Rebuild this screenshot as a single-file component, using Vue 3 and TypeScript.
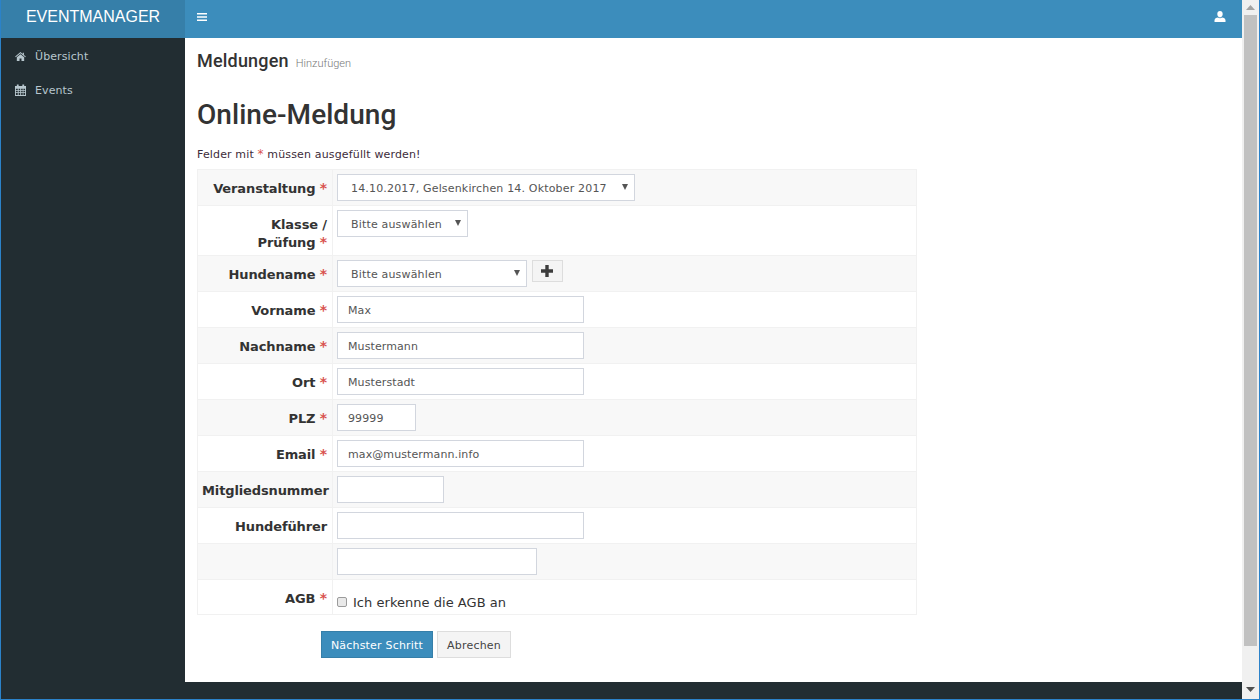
<script setup lang="ts">
interface Row { label: string; req: boolean; width?: number; value?: string }
const textRows: Row[] = [
  { label: 'Vorname', req: true, width: 247, value: 'Max' },
  { label: 'Nachname', req: true, width: 247, value: 'Mustermann' },
  { label: 'Ort', req: true, width: 247, value: 'Musterstadt' },
  { label: 'PLZ', req: true, width: 79, value: '99999' },
  { label: 'Email', req: true, width: 247, value: 'max@mustermann.info' },
  { label: 'Mitgliedsnummer', req: false, width: 107, value: '' },
  { label: 'Hundeführer', req: false, width: 247, value: '' },
  { label: '', req: false, width: 200, value: '' },
]
</script>

<template>
  <div class="window">
    <div class="page">
      <header class="topbar">
        <div class="brand">EVENTMANAGER</div>
        <div class="nav">
          <svg class="burger" width="10" height="8" viewBox="0 0 10 8"><path d="M0 0h10v1.600H0zM0 3.200h10v1.600H0zM0 6.400h10V8H0z" fill="#fff"/></svg>
          <svg class="user" width="12" height="12" viewBox="0 0 12 12"><path d="M6 0c1.700 0 2.700 1.300 2.700 3.100C8.700 4.700 7.800 6.500 6 6.500S3.300 4.700 3.300 3.100C3.300 1.300 4.300 0 6 0zM4 6.400c.5.500 1.200.800 2 .800s1.500-.3 2-.8c1.800.3 3.500 1 3.500 2.800V11H.5V9.200C.5 7.400 2.200 6.700 4 6.400z" fill="#fff"/></svg>
        </div>
      </header>
      <div class="body">
        <aside class="sidebar">
          <a class="item">
            <svg width="11" height="9" viewBox="0 0 13 11"><path d="M6.500 0 0 5.500l.7.800L6.500 1.500l5.800 4.800.7-.8-2.300-1.900V1h-1.500v1.300zM2 6.500V11h3.300V7.800h2.400V11H11V6.500L6.500 2.800z" fill="#b8c7ce"/></svg>
            <span>Übersicht</span>
          </a>
          <a class="item">
            <svg width="11" height="12" viewBox="0 0 12 13"><path fill-rule="evenodd" d="M0 2h2V.5h2V2h4V.5h2V2h2v11H0zM1 5v1.500h2V5zm3 0v1.500h1.700V5zm2.700 0v1.500h1.700V5zm2.500 0v1.500H11V5zM1 7.400V9h2V7.400zm3 0V9h1.700V7.400zm2.700 0V9h1.700V7.400zm2.500 0V9H11V7.400zM1 9.900V12h2V9.900zm3 0V12h1.700V9.900zm2.700 0V12h1.700V9.900zm2.500 0V12H11V9.900z" fill="#b8c7ce"/></svg>
            <span>Events</span>
          </a>
        </aside>
        <main class="content">
          <div class="content-inner">
            <div class="crumb"><h1>Meldungen</h1><small>Hinzufügen</small></div>
            <h2>Online-Meldung</h2>
            <p class="hint">Felder mit <span class="star">*</span> müssen ausgefüllt werden!</p>
            <table class="form">
              <tbody>
                <tr>
                  <th>Veranstaltung <span class="star">*</span></th>
                  <td><span class="select w298">14.10.2017, Gelsenkirchen 14. Oktober 2017<i class="caret"></i></span></td>
                </tr>
                <tr>
                  <th>Klasse /<br />Prüfung <span class="star">*</span></th>
                  <td class="tall"><span class="select w131">Bitte auswählen<i class="caret"></i></span></td>
                </tr>
                <tr>
                  <th>Hundename <span class="star">*</span></th>
                  <td>
                    <div class="with-add">
                      <span class="select w190">Bitte auswählen<i class="caret"></i></span>
                      <button class="add" type="button">
                        <svg width="12" height="12" viewBox="0 0 12 12"><path d="M4.300 0h3.400v4.300H12v3.400H7.700V12H4.300V7.700H0V4.300h4.300z" fill="#3c3c3c"/></svg>
                      </button>
                    </div>
                  </td>
                </tr>
                <tr v-for="(r, i) in textRows" :key="i">
                  <th>{{ r.label }} <span v-if="r.req" class="star">*</span></th>
                  <td><input class="input" type="text" :value="r.value" :style="{ width: r.width + 'px' }" /></td>
                </tr>
                <tr>
                  <th>AGB <span class="star">*</span></th>
                  <td class="agb-cell"><label><input type="checkbox" class="check" />Ich erkenne die AGB an</label></td>
                </tr>
              </tbody>
            </table>
            <div class="actions">
              <button class="btn primary" type="button">Nächster Schritt</button>
              <button class="btn" type="button">Abrechen</button>
            </div>
          </div>
        </main>
      </div>
    </div>
    <div class="scrollbar">
      <svg width="9" height="5" viewBox="0 0 9 5"><path d="M4.500 0 9 5H0z" fill="#a3a3a3"/></svg>
      <div class="thumb"></div>
      <svg width="9" height="5" viewBox="0 0 9 5"><path d="M0 0h9L4.500 5z" fill="#505050"/></svg>
    </div>
  </div>
</template>

<style>
html, body { margin: 0; overflow: hidden; }
</style>

<style scoped>
.window {
  width: 1260px; height: 700px; box-sizing: border-box; display: flex;
  border: 1px solid #2b82c9; border-top: 0; background: #222d32;
  font-family: "DejaVu Sans", Verdana, sans-serif; font-size: 12px; color: #333;
}
.page { flex: 1; min-width: 0; display: flex; flex-direction: column; }
.topbar { height: 38px; display: flex; flex: none; }
.brand {
  width: 184px; background: #367fa9; color: #fff; text-align: center;
  font: 16px/34px "Liberation Sans", Arial, sans-serif;
}
.nav { flex: 1; background: #3c8dbc; display: flex; align-items: center; justify-content: space-between; padding: 0 16px 4px 12px; box-sizing: border-box; }
.body { flex: 1; display: flex; min-height: 0; }
.sidebar { width: 184px; flex: none; background: #222d32; padding-top: 1px; }
.item { height: 34px; display: flex; align-items: center; color: #b8c7ce; gap: 9px; padding-left: 14px; font-size: 11px; letter-spacing: 0.1px; }
.item svg { flex: none; }
.content { flex: 1; min-width: 0; height: 644px; background: #fff; }
.content-inner { padding: 9px 0 0 12px; }
.crumb { display: flex; align-items: baseline; height: 27px; }
h1 { margin: 0; font: 500 18px/27px Roboto, "Noto Sans", sans-serif; color: #333; letter-spacing: 0.2px; }
small { margin-left: 7px; font: 300 11px/16px Roboto, "Noto Sans", sans-serif; color: #777; }
h2 { margin: 23px 0 0; font: 500 28px/36px Roboto, "Noto Sans", sans-serif; color: #333; letter-spacing: 0.05px; }
.hint { margin: 14px 0 0; font-size: 11px; line-height: 16px; color: #3d2c3a; letter-spacing: 0.15px; }
.star { color: #d9534f; }
.hint .star { font-size: 12px; line-height: 0; }
.form { border-collapse: collapse; width: 720px; margin-top: 6px; table-layout: fixed; }
.form tr:nth-child(odd) { background: #f8f8f8; }
.form th, .form td { border: 1px solid #f1f1f1; box-sizing: border-box; }
.form th {
  width: 135px; padding: 10px 5px 0 4px; vertical-align: top; text-align: right;
  font-size: 13px; line-height: 18px; font-weight: 700; color: #333; letter-spacing: -0.12px;
}
.form th .star { font-size: 14px; line-height: 0; }
.form td { padding: 4px; vertical-align: top; height: 36px; }
.form td.tall { height: 50px; }
.select {
  box-sizing: border-box; height: 27px; display: flex; align-items: center; position: relative;
  padding: 2px 0 0 13px; background: #fff; border: 1px solid #d2d6de;
  font-size: 11px; color: #555; letter-spacing: 0.17px;
}
.w298 { width: 298px; }
.w131 { width: 131px; }
.w190 { width: 190px; }
.caret {
  position: absolute; right: 6px; top: 9px; width: 0; height: 0;
  border-left: 3px solid transparent; border-right: 3px solid transparent; border-top: 6px solid #555;
}
.with-add { display: flex; gap: 5px; align-items: flex-start; }
.add {
  width: 31px; height: 22px; padding: 0 1px 0 0; border: 1px solid #ddd; background: #f4f4f4;
  display: flex; align-items: center; justify-content: center;
}
.input {
  box-sizing: border-box; height: 27px; display: block; padding: 2px 10px 0; border: 1px solid #d2d6de; background: #fff;
  font: 11px "DejaVu Sans", Verdana, sans-serif; color: #555; outline: 0; letter-spacing: 0.1px;
}
.form td.agb-cell { height: 35px; padding: 0 4px; }
.agb-cell label { display: flex; align-items: center; height: 18px; margin-top: 13px; font-size: 13px; color: #333; letter-spacing: 0.03px; }
.check {
  appearance: none; box-sizing: border-box; width: 10px; height: 10px; margin: 0 6px 0 0; padding: 0;
  background: #e9e9e9; border: 1px solid #9b9b9b; border-radius: 2px;
}
.actions { display: flex; gap: 4px; margin: 16px 0 0 124px; }
.btn {
  box-sizing: border-box; height: 27px; width: 74px; padding: 2px 0 0; border: 1px solid #ddd; background: #f4f4f4;
  font: 11px "DejaVu Sans", Verdana, sans-serif; color: #444; letter-spacing: 0.2px;
}
.btn.primary { width: 112px; background: #3c8dbc; border-color: #367fa9; color: #fff; }
.scrollbar {
  width: 17px; flex: none; background: #f0f0f0; display: flex; flex-direction: column; align-items: center;
  padding: 5px 0 7px; box-sizing: border-box;
}
.thumb { width: 13px; height: 631px; background: #c1c1c1; margin: 5px 0 auto; }
</style>
